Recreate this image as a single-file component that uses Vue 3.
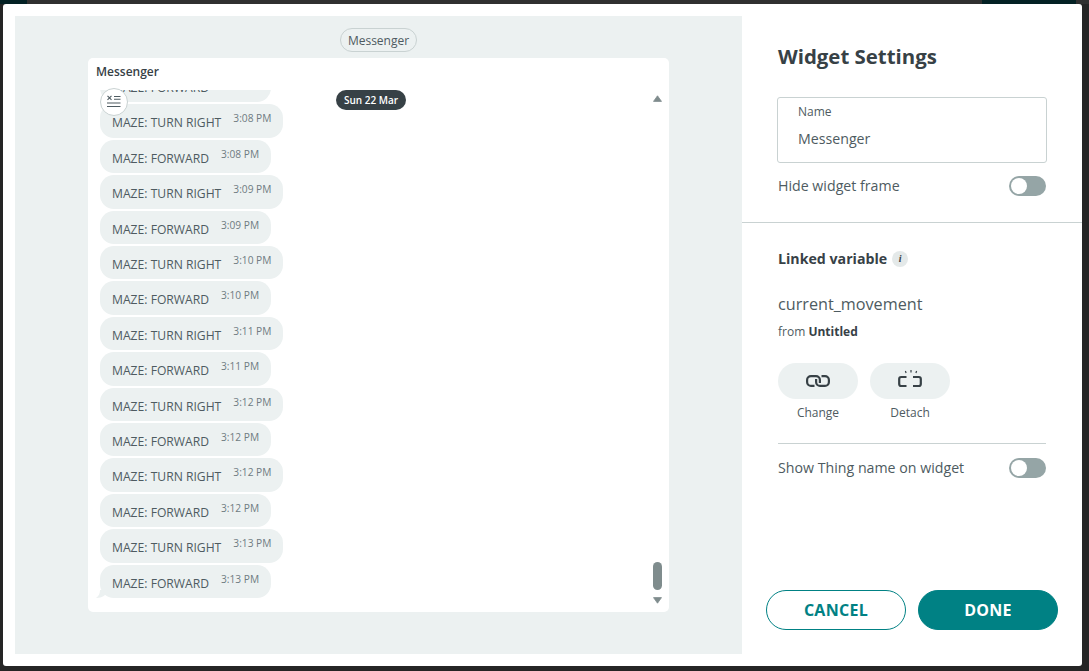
<script setup>
const times = ['3:08 PM','3:08 PM','3:09 PM','3:09 PM','3:10 PM','3:10 PM','3:11 PM','3:11 PM','3:12 PM','3:12 PM','3:12 PM','3:12 PM','3:13 PM','3:13 PM']
const messages = [{ text: 'MAZE: FORWARD', time: '3:07 PM' }].concat(
  times.map((time, i) => ({ text: i % 2 ? 'MAZE: FORWARD' : 'MAZE: TURN RIGHT', time }))
)
</script>

<template>
  <div class="page">
    <div class="modal">
      <section class="preview">
        <div class="chip">Messenger</div>
        <div class="card">
          <div class="card-title">Messenger</div>
          <div class="list">
            <div v-for="(m, i) in messages" :key="i" class="bubble">
              <span class="msg">{{ m.text }}</span>
              <span class="time">{{ m.time }}</span>
            </div>
            <svg class="tail" width="12" height="8" viewBox="0 0 12 8"><path d="M4 0 C4 3 3 6 0 8 C4 8 7 7 9 5 L12 0 Z" fill="#ecf1f1"/></svg>
          </div>
          <button class="clear" aria-label="Clear">
            <svg width="16" height="14" viewBox="0 0 16 14" fill="none" stroke="#4e5b61">
              <path d="M1.5 .8 L5.5 4.8 M5.5 .8 L1.5 4.8" stroke-width="1.1"/>
              <path d="M8 1.5H14.5M8 4.2H14.5" stroke-width="1.1"/>
              <path d="M1 8H14.5M1 11.5H14.5" stroke-width="1.2"/>
            </svg>
          </button>
          <div class="date">Sun 22 Mar</div>
          <div class="scrollbar">
            <svg class="arrow-up" width="9" height="7" viewBox="0 0 9 7"><path d="M4.5 .8 L8.5 6.4 H.5 Z" fill="#7f8c8d" stroke="#7f8c8d" stroke-width=".8" stroke-linejoin="round"/></svg>
            <span class="thumb"></span>
            <svg class="arrow-down" width="9" height="7" viewBox="0 0 9 7"><path d="M4.5 6.2 L8.5 .6 H.5 Z" fill="#7f8c8d" stroke="#7f8c8d" stroke-width=".8" stroke-linejoin="round"/></svg>
          </div>
        </div>
      </section>

      <aside class="settings">
        <div class="block top">
          <h1>Widget Settings</h1>
          <div class="field">
            <label>Name</label>
            <div class="value">Messenger</div>
          </div>
          <div class="row">
            <span>Hide widget frame</span>
            <span class="toggle"></span>
          </div>
        </div>
        <div class="block linked">
          <div class="linked-title">
            <strong>Linked variable</strong>
            <span class="info">i</span>
          </div>
          <div class="var">current_movement</div>
          <div class="from">from <b>Untitled</b></div>
          <div class="actions">
            <div class="action">
              <button class="icon-btn" aria-label="Change">
                <svg width="24" height="12" viewBox="0 0 24 12" fill="none" stroke="#374146" stroke-width="2.2">
                  <path d="M8.5 10.8H5A3.9 3.9 0 0 1 1.1 6.9V5.1A3.9 3.9 0 0 1 5 1.2H10A3.9 3.9 0 0 1 13.9 5.1V8"/>
                  <path d="M15.5 1.2H19A3.9 3.9 0 0 1 22.9 5.1V6.9A3.9 3.9 0 0 1 19 10.8H14A3.9 3.9 0 0 1 10.1 6.9V4"/>
                </svg>
              </button>
              <span>Change</span>
            </div>
            <div class="action">
              <button class="icon-btn" aria-label="Detach">
                <svg width="24" height="22" viewBox="0 0 24 22" fill="none" stroke="#374146">
                  <path d="M8.5 7H3.2A2 2 0 0 0 1.2 9V14A2 2 0 0 0 3.2 16H8.5" stroke-width="2.2"/>
                  <path d="M15 7H20.8A2 2 0 0 1 22.8 9V14A2 2 0 0 1 20.8 16H15" stroke-width="2.2"/>
                  <path d="M13 0V2.6M7.4 1L8.1 3M18.6 1L17.9 3" stroke-width="1.2"/>
                </svg>
              </button>
              <span>Detach</span>
            </div>
          </div>
          <div class="row thing">
            <span>Show Thing name on widget</span>
            <span class="toggle"></span>
          </div>
        </div>
        <div class="footer">
          <button class="btn outline">CANCEL</button>
          <button class="btn solid">DONE</button>
        </div>
      </aside>
    </div>
  </div>
</template>

<style>
html, body { margin: 0; background: #252525; }
</style>

<style scoped>
* { box-sizing: border-box; }
.page {
  width: 1089px;
  height: 671px;
  padding: 4px 7px 5px 3px;
  background:
    linear-gradient(to right, #032124 0 27px, #303030 27px 982px, #032124 982px 1076px, #303030 1076px) no-repeat 0 0 / 100% 4px,
    #252525;
  font-family: "Open Sans", "Liberation Sans", sans-serif;
  color: #4e5b61;
}
.modal {
  height: 100%;
  background: #fff;
  border-radius: 3px;
  padding: 12px 0 12px 12px;
  display: flex;
}
.preview {
  width: 727px;
  background: #ecf1f1;
  padding: 12px 73px 42px;
  display: flex;
  flex-direction: column;
  align-items: center;
}
.chip {
  height: 24px;
  padding: 0 7px;
  border: 1px solid #c9d2d2;
  border-radius: 12px;
  font-size: 12px;
  line-height: 23px;
  margin-bottom: 6px;
  flex: none;
}
.card {
  position: relative;
  width: 581px;
  flex: 1;
  min-height: 0;
  background: #fff;
  border-radius: 5px;
  display: flex;
  flex-direction: column;
  padding: 0 12px 14px;
}
.card-title {
  font-size: 12px;
  font-weight: 600;
  line-height: 16px;
  color: #374146;
  margin: 6px 0 10px -4px;
  flex: none;
}
.list {
  position: relative;
  flex: 1;
  min-height: 0;
  overflow: hidden;
  display: flex;
  flex-direction: column;
  justify-content: flex-end;
  align-items: flex-start;
  gap: 2px;
  margin-left: -4px;
  padding-left: 4px;
}
.bubble {
  flex: none;
  height: 33.42px;
  background: #ecf1f1;
  border-radius: 14px;
  padding: 0 12px;
  display: flex;
  align-items: flex-start;
  gap: 12px;
}
.msg {
  font-size: 12.15px;
  line-height: 16px;
  margin-top: 11px;
  white-space: nowrap;
}
.time {
  font-size: 10.2px;
  line-height: 14px;
  margin-top: 7px;
  color: #6f7c82;
  white-space: nowrap;
}
.tail { position: absolute; left: 0; bottom: 0; }
.clear {
  position: absolute;
  left: 12px;
  top: 30px;
  width: 28px;
  height: 28px;
  padding: 0;
  border-radius: 50%;
  border: 1px solid #c9d2d2;
  background: #fff;
  display: flex;
  align-items: center;
  justify-content: center;
}
.date {
  position: absolute;
  left: 248px;
  top: 32px;
  height: 20px;
  padding: 0 8px;
  border-radius: 10px;
  background: #374146;
  color: #fff;
  font-size: 10px;
  font-weight: 600;
  line-height: 20px;
}
.scrollbar {
  position: absolute;
  right: 7px;
  top: 37px;
  bottom: 8px;
  width: 9px;
  display: flex;
  flex-direction: column;
  align-items: center;
}
.arrow-up { margin-bottom: auto; flex: none; }
.arrow-down { margin-top: 7px; flex: none; }
.thumb {
  width: 9px;
  height: 28px;
  border-radius: 4.5px;
  background: #7f8c8d;
  flex: none;
}
.settings {
  flex: 1;
  min-width: 0;
  display: flex;
  flex-direction: column;
}
.block { padding: 0 36px; }
.top {
  height: 207px;
  border-bottom: 1px solid #c9d2d2;
  padding-top: 26px;
}
h1 {
  margin: 0 0 27px;
  font-size: 20.4px;
  font-weight: 700;
  line-height: 28px;
  color: #374146;
}
.field {
  margin-left: -1px;
  margin-right: -1px;
  height: 66px;
  border: 1px solid #c9d2d2;
  border-radius: 3px;
  padding: 6px 20px 0;
}
.field label {
  display: block;
  font-size: 12px;
  line-height: 16px;
}
.value {
  font-size: 14.2px;
  line-height: 20px;
  margin-top: 9px;
}
.row {
  display: flex;
  align-items: center;
  justify-content: space-between;
  font-size: 14.2px;
  line-height: 20px;
  margin-top: 13px;
}
.toggle {
  position: relative;
  width: 37px;
  height: 20px;
  border-radius: 10px;
  background: #95a5a6;
}
.toggle::before {
  content: "";
  position: absolute;
  left: 2px;
  top: 2px;
  width: 16px;
  height: 16px;
  border-radius: 50%;
  background: #fff;
}
.linked { padding-top: 26px; }
.linked-title {
  display: flex;
  align-items: center;
  gap: 5px;
  font-size: 14.2px;
  line-height: 20px;
  color: #374146;
}
.linked-title strong { font-weight: 700; }
.info {
  flex: none;
  width: 16px;
  height: 16px;
  border-radius: 50%;
  background: #e4e9e9;
  font-family: "Liberation Serif", serif;
  font-style: italic;
  font-weight: 700;
  font-size: 10px;
  line-height: 16px;
  text-align: center;
}
.var {
  font-size: 16.2px;
  line-height: 22px;
  margin-top: 24px;
}
.from {
  font-size: 12px;
  line-height: 16px;
  margin-top: 9px;
}
.from b { font-weight: 700; color: #374146; }
.actions {
  display: flex;
  gap: 12px;
  margin-top: 23px;
  padding-bottom: 22px;
  border-bottom: 1px solid #c9d2d2;
}
.action {
  width: 80px;
  display: flex;
  flex-direction: column;
  align-items: center;
  gap: 6px;
  font-size: 12px;
  line-height: 16px;
}
.icon-btn {
  width: 80px;
  height: 36px;
  padding: 0;
  border: 0;
  border-radius: 18px;
  background: #ecf1f1;
  display: flex;
  align-items: center;
  justify-content: center;
}
.thing { margin-top: 14px; }
.footer {
  margin-top: auto;
  display: flex;
  gap: 12px;
  padding: 0 24px 24px;
}
.btn {
  width: 140px;
  height: 40px;
  border-radius: 20px;
  font-family: inherit;
  font-size: 16px;
  font-weight: 700;
  letter-spacing: .3px;
  padding: 0;
}
.outline {
  background: #fff;
  border: 1px solid #008184;
  color: #008184;
}
.solid {
  background: #008184;
  border: 1px solid #008184;
  color: #fff;
}
</style>
